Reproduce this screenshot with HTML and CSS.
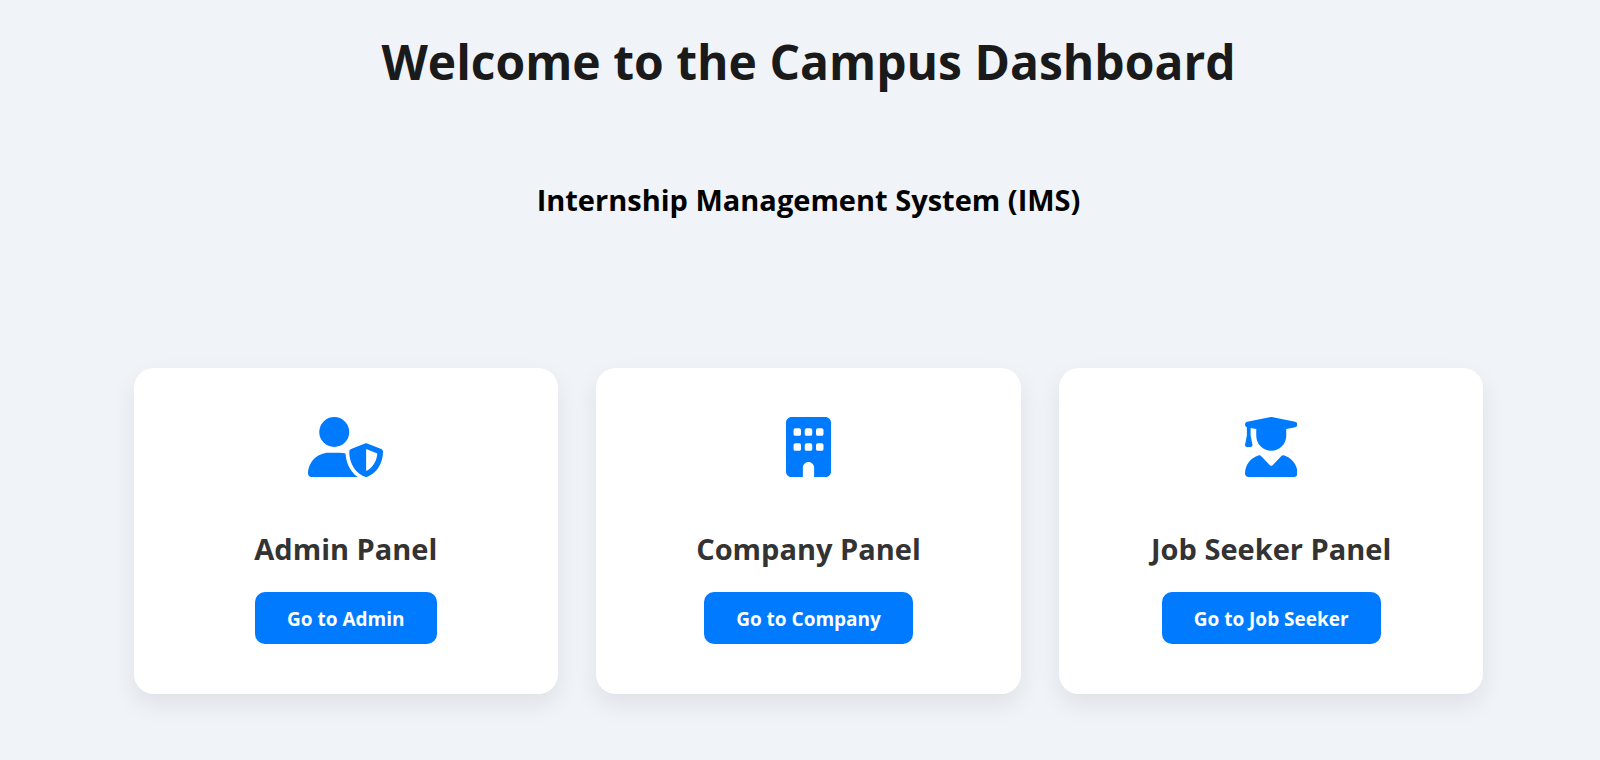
FILE: index.html
```
<!DOCTYPE html>
<html lang="en">
<head>
<meta charset="utf-8">
<meta name="viewport" content="width=device-width, initial-scale=1">
<title>Campus Dashboard</title>
<link rel="stylesheet" href="styles.css">
</head>
<body>
<main class="dashboard">
  <h1 class="title">Welcome to the Campus Dashboard</h1>
  <h2 class="subtitle">Internship Management System (IMS)</h2>
  <div class="cards">
    <section class="card">
      <svg class="icon" viewBox="0 0 640 512" aria-hidden="true"><path d="M224 256A128 128 0 1 0 224 0a128 128 0 1 0 0 256zm-45.700 48C79.800 304 0 383.800 0 482.300C0 498.700 13.300 512 29.700 512l388.600 0c1.800 0 3.500-.2 5.300-.5c-76.300-55.100-99.800-141-103.100-200.200c-16.100-4.800-33.100-7.300-50.700-7.300l-91.400 0zm308.800-78.300l-120 48C358 277.400 352 286.200 352 296c0 63.300 25.900 168.800 134.800 214.200c5.900 2.500 12.600 2.500 18.500 0C614.100 464.800 640 359.300 640 296c0-9.800-6-18.600-15.100-22.300l-120-48c-5.700-2.300-12.100-2.300-17.800 0zM591.400 312c-3.900 50.700-27.200 116.700-95.400 149.700l0-187.800L591.400 312z"/></svg>
      <h3 class="card-title">Admin Panel</h3>
      <button class="go" type="button">Go to Admin</button>
    </section>
    <section class="card">
      <svg class="icon" viewBox="0 0 384 512" aria-hidden="true"><path fill-rule="evenodd" d="M48 0C21.500 0 0 21.500 0 48L0 464c0 26.500 21.500 48 48 48l96 0 0-80c0-26.500 21.500-48 48-48s48 21.500 48 48l0 80 96 0c26.500 0 48-21.500 48-48l0-416c0-26.500-21.500-48-48-48L48 0zM80 224h32a16 16 0 0 1 16 16v32a16 16 0 0 1-16 16h-32a16 16 0 0 1-16-16v-32a16 16 0 0 1 16-16zM176 224h32a16 16 0 0 1 16 16v32a16 16 0 0 1-16 16h-32a16 16 0 0 1-16-16v-32a16 16 0 0 1 16-16zM272 224h32a16 16 0 0 1 16 16v32a16 16 0 0 1-16 16h-32a16 16 0 0 1-16-16v-32a16 16 0 0 1 16-16zM80 96h32a16 16 0 0 1 16 16v32a16 16 0 0 1-16 16h-32a16 16 0 0 1-16-16v-32a16 16 0 0 1 16-16zM176 96h32a16 16 0 0 1 16 16v32a16 16 0 0 1-16 16h-32a16 16 0 0 1-16-16v-32a16 16 0 0 1 16-16zM272 96h32a16 16 0 0 1 16 16v32a16 16 0 0 1-16 16h-32a16 16 0 0 1-16-16v-32a16 16 0 0 1 16-16z"/></svg>
      <h3 class="card-title">Company Panel</h3>
      <button class="go" type="button">Go to Company</button>
    </section>
    <section class="card">
      <svg class="icon" viewBox="0 0 448 512" aria-hidden="true"><path d="M219.300 .5c3.100-.6 6.300-.6 9.400 0l200 40C439.900 42.700 448 52.600 448 64s-8.100 21.300-19.300 23.500L352 102.900l0 57.100c0 70.700-57.300 128-128 128s-128-57.300-128-128l0-57.100L48 93.300l0 65.100 15.700 78.400c.9 4.700-.3 9.600-3.300 13.300s-7.600 5.900-12.400 5.900l-32 0c-4.800 0-9.300-2.100-12.400-5.900s-4.300-8.600-3.300-13.300L16 158.400l0-71.800C6.500 83.300 0 74.300 0 64C0 52.600 8.100 42.700 19.300 40.500l200-40zM111.900 327.700c10.500-3.400 21.800 .4 29.400 8.500l71 75.500c6.300 6.700 17 6.700 23.300 0l71-75.500c7.600-8.100 18.900-11.900 29.400-8.500C401 348.600 448 409.400 448 481.300c0 17-13.800 30.700-30.700 30.700L30.700 512C13.800 512 0 498.200 0 481.300c0-71.900 47-132.700 111.900-153.600z"/></svg>
      <h3 class="card-title">Job Seeker Panel</h3>
      <button class="go" type="button">Go to Job Seeker</button>
    </section>
  </div>
</main>
</body>
</html>
```
FILE: styles.css
```
* {
  box-sizing: border-box;
}

body {
  margin: 0;
  background: #f0f4f8;
  font-family: "Segoe UI", "Open Sans", "Noto Sans", sans-serif;
}

.dashboard {
  display: flex;
  flex-direction: column;
  align-items: center;
  padding: 32px 0 50px 17px;
  text-align: center;
}

.title {
  margin: 0 0 88px;
  color: #1a1a1a;
  font-size: 48px;
  font-weight: 700;
  line-height: 60px;
}

.subtitle {
  margin: 0 0 148px;
  color: #000;
  font-size: 29px;
  font-weight: 700;
  line-height: 40px;
}

.cards {
  display: grid;
  grid-template-columns: repeat(auto-fit, minmax(300px, 1fr));
  gap: 38px;
  width: 100%;
  max-width: 1350px;
}

.card {
  display: flex;
  flex-direction: column;
  align-items: center;
  padding: 49px 38px 50px;
  border-radius: 20px;
  background: #fff;
  box-shadow: 0 10px 25px rgba(0, 0, 0, 0.08);
}

.icon {
  height: 60px;
  margin-bottom: 52px;
  fill: #007bff;
}

.card-title {
  margin: 0 0 23px;
  color: #333;
  font-size: 29px;
  font-weight: 700;
  line-height: 40px;
}

.go {
  padding: 14px 32px 12px;
  border: 0;
  border-radius: 10px;
  background: #007bff;
  color: #fff;
  font-family: inherit;
  font-size: 19px;
  font-weight: 700;
  line-height: 26px;
  cursor: pointer;
}
```
